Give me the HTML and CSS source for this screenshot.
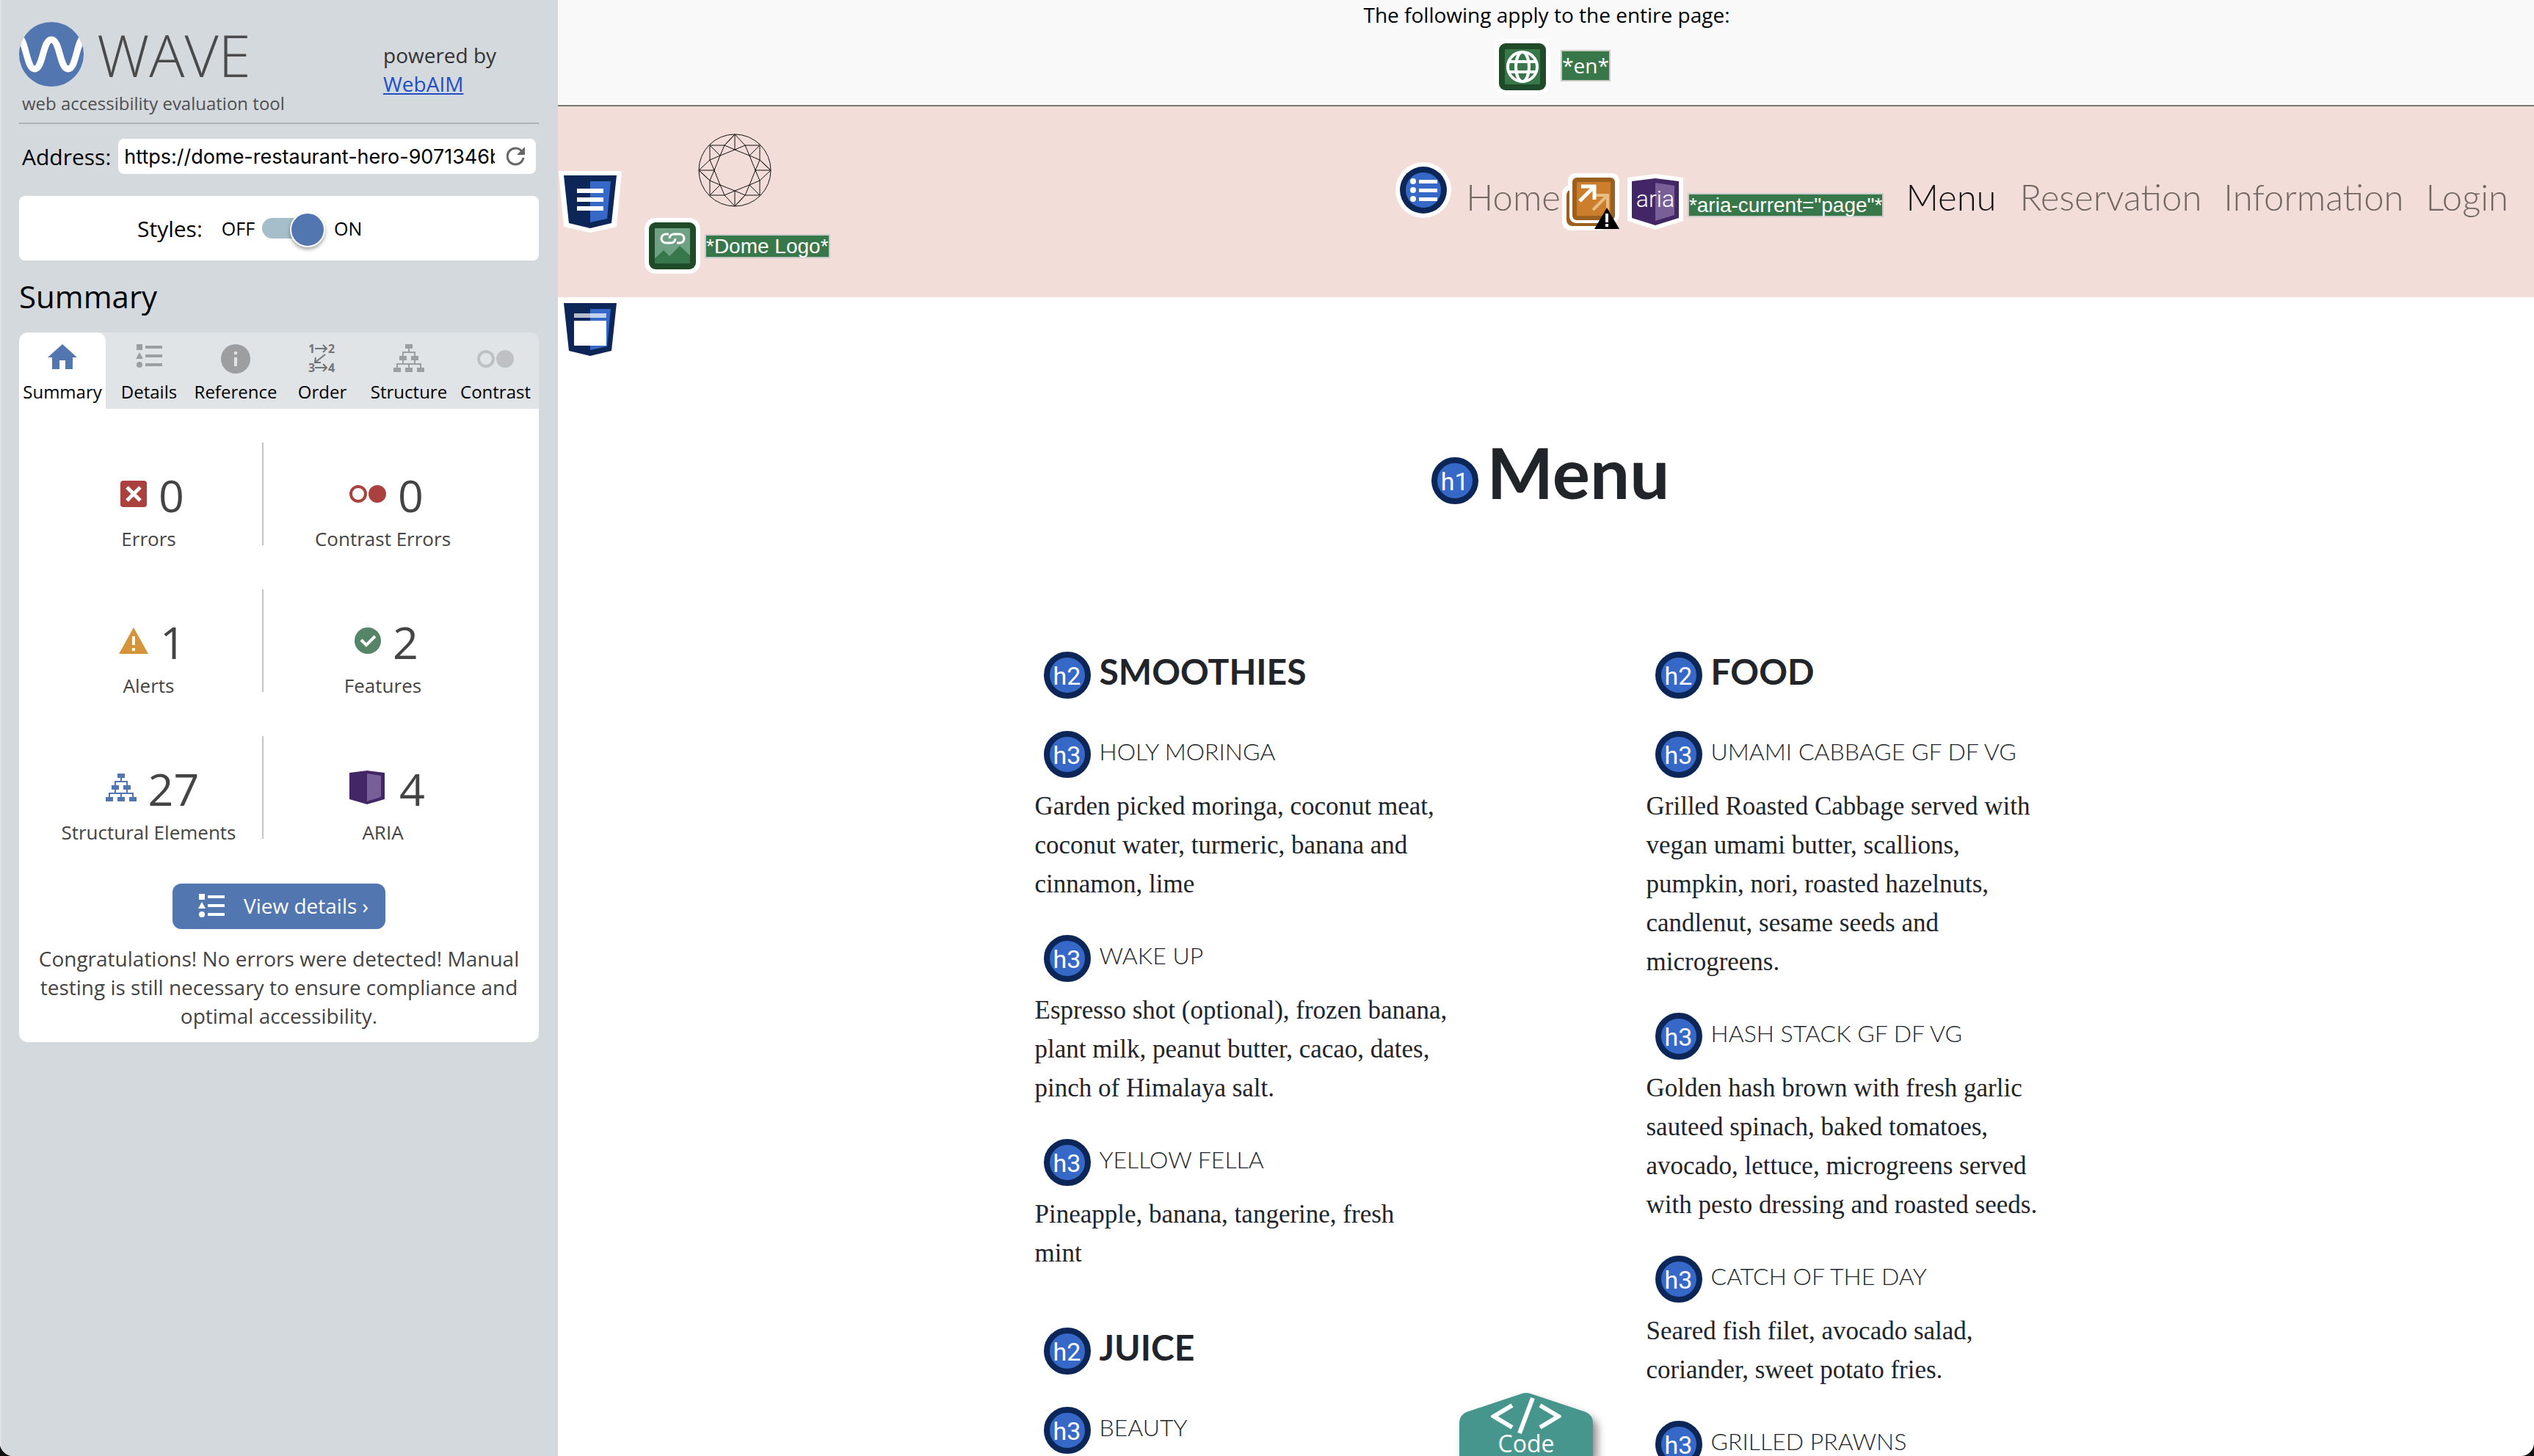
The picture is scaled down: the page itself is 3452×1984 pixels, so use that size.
FILE: index.html
```html
<!DOCTYPE html>
<html lang="en">
<head>
<meta charset="utf-8">
<title>WAVE Report of Dome Restaurant Menu</title>
<link rel="stylesheet" href="styles.css">
</head>
<body>
<svg class="defs" aria-hidden="true">
  <symbol id="i-list" viewBox="0 0 36 32">
    <rect x="1" width="8" height="8"/><path d="M5 11l5 9H0z"/><circle cx="5" cy="28" r="4"/>
    <rect x="13" y="2" width="23" height="4"/><rect x="13" y="14" width="23" height="4"/><rect x="13" y="26" width="23" height="4"/>
  </symbol>
  <symbol id="i-tree" viewBox="0 0 42 38">
    <path d="M16 0h10v6H16zM8 16h10v6H8zM24 16h10v6H24zM0 32h10v6H0zM16 32h10v6H16zM32 32h10v6H32z"/>
    <path d="M21 5v6M13 17v-6h16v6M13 21v6M29 21v6M5 33v-6h32v6M21 27v6" fill="none" stroke="currentColor" stroke-width="2"/>
  </symbol>
  <symbol id="i-contrast" viewBox="0 0 50 24">
    <circle cx="12" cy="12" r="10" fill="none" stroke="currentColor" stroke-width="4"/><circle cx="38" cy="12" r="12"/>
  </symbol>
</svg>
<div class="app">
<aside class="sidebar">
  <header class="brand">
    <div class="brand-main">
      <div class="brand-logo">
        <svg width="88" height="88" viewBox="0 0 88 88" aria-hidden="true"><defs><clipPath id="disc"><circle cx="44" cy="44" r="44"/></clipPath></defs><circle cx="44" cy="44" r="44" fill="#5276b0"/><path clip-path="url(#disc)" d="M-2 18C10 24 10 64 21 64C33 64 32 24 44 24C56 24 55 64 67 64C78 64 78 24 90 18" fill="none" stroke="#fff" stroke-width="9"/></svg>
        <span class="brand-name">WAVE</span>
      </div>
      <p class="tagline">web accessibility evaluation tool</p>
    </div>
    <p class="powered">powered by<br><a href="#webaim">WebAIM</a></p>
  </header>
  <form class="address">
    <label for="url">Address:</label>
    <div class="address-box">
      <input id="url" type="text" value="https://dome-restaurant-hero-9071346b">
      <button type="button" aria-label="Reload"><svg width="26" height="26" viewBox="0 0 26 26"><path d="M22 8A11 11 0 1 0 23 15" fill="none" stroke="#666" stroke-width="3"/><path d="M25 0v11H14z" fill="#666"/></svg></button>
    </div>
  </form>
  <div class="styles-box">
    <span class="styles-label">Styles:</span>
    <label class="toggle"><span>OFF</span><input type="checkbox" checked><span>ON</span></label>
  </div>
  <h2 class="side-title">Summary</h2>
  <nav class="tabs">
    <button class="tab tab-active"><svg width="40" height="34" viewBox="0 0 40 34"><path d="M20 0l20 18h-6v16H24V22h-8v12H6V18H0z"/></svg>Summary</button>
    <button class="tab"><svg width="36" height="32"><use href="#i-list"/></svg>Details</button>
    <button class="tab"><svg width="40" height="40" viewBox="0 0 40 40"><circle cx="20" cy="20" r="20"/><path d="M18 10h4v4h-4zM18 18h4v12h-4z" fill="#e0e4e7"/></svg>Reference</button>
    <button class="tab tab-order"><svg width="40" height="40" viewBox="0 0 40 40"><g font-family="Open Sans" font-weight="700" font-size="16"><text x="1" y="12">1</text><text x="28" y="12">2</text><text x="1" y="38">3</text><text x="28" y="38">4</text></g><path d="M10 6h16M21 1l5 5-5 5M10 32h16M21 27l5 5-5 5M24 14L10 25M11 18l-1 7h8" fill="none" stroke="currentColor" stroke-width="2"/></svg>Order</button>
    <button class="tab"><svg width="42" height="38"><use href="#i-tree"/></svg>Structure</button>
    <button class="tab tab-faint"><svg width="50" height="40" viewBox="0 -8 50 40"><use href="#i-contrast" width="50" height="24"/></svg>Contrast</button>
  </nav>
  <section class="panel">
    <ul class="stats">
      <li><div class="stat"><svg class="red" width="36" height="36" viewBox="0 0 36 36"><rect width="36" height="36" rx="4"/><path d="M9 9l18 18M27 9L9 27" stroke="#fff" stroke-width="5"/></svg><b>0</b></div>Errors</li>
      <li><div class="stat"><svg class="red" width="50" height="24"><use href="#i-contrast"/></svg><b>0</b></div>Contrast Errors</li>
      <li><div class="stat"><svg class="amber" width="40" height="36" viewBox="0 0 40 36"><path d="M20 0l20 36H0z"/><path d="M18 12h4v12h-4zM18 28h4v4h-4z" fill="#fff"/></svg><b>1</b></div>Alerts</li>
      <li><div class="stat"><svg class="green" width="36" height="36" viewBox="0 0 36 36"><circle cx="18" cy="18" r="18"/><path d="M9 17l7 7 12-12" fill="none" stroke="#fff" stroke-width="4"/></svg><b>2</b></div>Features</li>
      <li><div class="stat"><svg class="blue" width="42" height="38"><use href="#i-tree"/></svg><b>27</b></div>Structural Elements</li>
      <li><div class="stat"><svg width="54" height="46" viewBox="-2 0 54 46"><path d="M0 3l24-3 24 3v36l-24 7-24-7z" fill="#432665"/><path d="M24 4l19 3v29l-19 6z" fill="#795f98"/></svg><b>4</b></div>ARIA</li>
    </ul>
    <button class="details"><svg width="36" height="32"><use href="#i-list"/></svg>View details ›</button>
    <p class="congrats">Congratulations! No errors were detected! Manual testing is still necessary to ensure compliance and optimal accessibility.</p>
  </section>
</aside>
<div class="page">
  <div class="page-bar">
    <p>The following apply to the entire page:</p>
    <div class="page-icons">
      <svg width="76" height="76" viewBox="-6 -6 76 76"><rect x="-6" y="-6" width="76" height="76" rx="15" fill="#fff"/><rect width="64" height="64" rx="9" fill="#1f4b29"/><rect x="8" y="8" width="48" height="48" rx="1" fill="#38774a"/><g fill="none" stroke="#fff" stroke-width="4"><circle cx="32" cy="32" r="20"/><ellipse cx="32" cy="32" rx="9" ry="20"/><path d="M14 25h36M14 39h36"/></g></svg>
      <span class="tag tag-lang">*en*</span>
    </div>
  </div>
  <header class="site-header">
    <svg class="landmark" width="86" height="84" viewBox="-7 -6 86 84"><path d="M-7-6H79L72 70 36 78 0 70z" fill="#fff"/><path d="M0 0h72l-7 65-29 7-29-7z" fill="#0c2757"/><path d="M36 8h28l-5 51-23 5z" fill="#3669c7"/><path d="M18 18h36v6H18zM18 30h36v6H18zM18 42h36v6H18z" fill="#fff"/></svg>
    <a class="logo" href="#home" aria-label="Dome">
      <svg class="dome" width="102" height="102" viewBox="-51 -51 102 102"><circle r="49"/><g><g id="q"><path d="M0-49V-28M0-49L14-34 34-34 20-20 14-34 0-28 20-20M0-49L-14-34 0-28-20-20M34-34V-14L20-20M34-14L49 0"/></g><use href="#q" transform="rotate(90)"/><use href="#q" transform="rotate(180)"/><use href="#q" transform="rotate(270)"/></g></svg>
      <span class="logo-note"><svg width="76" height="76" viewBox="-6 -6 76 76"><rect x="-6" y="-6" width="76" height="76" rx="15" fill="#fff"/><rect width="64" height="64" rx="9" fill="#1f4b29"/><rect x="8" y="8" width="48" height="48" rx="1" fill="#6fa184"/><path d="M8 49l12-11 8 8 14-14 14 13v11H8z" fill="#38774a"/><path d="M27 16h-4a6 6 0 0 0 0 12h7a6 6 0 0 0 6-6M38 28h4a6 6 0 0 0 0-12h-7a6 6 0 0 0-7 6" fill="none" stroke="#fff" stroke-width="3"/></svg><span class="tag">*Dome Logo*</span></span>
    </a>
    <nav class="site-nav">
      <svg class="nav-list" width="76" height="76" viewBox="-38 -38 76 76"><circle r="38" fill="#fff"/><circle r="32" fill="#0c2757"/><circle r="24" fill="#3669c7"/><g fill="#fff"><circle cx="-14" cy="-12" r="4"/><circle cx="-14" r="4"/><circle cx="-14" cy="12" r="4"/><path d="M-6-14h25v5H-6zM-6-2h25v5H-6zM-6 10h25v5H-6z"/></g></svg>
      <a href="#home">Home</a>
      <svg class="nav-alert" width="78" height="78" viewBox="0 0 78 78"><rect x="8" width="70" height="68" rx="10" fill="#fff"/><rect y="16" width="62" height="62" rx="12" fill="#fff"/><rect x="6" y="22" width="50" height="50" rx="8" fill="#9b5f20"/><rect x="10" y="2" width="66" height="66" rx="9" fill="#fff"/><rect x="14" y="6" width="58" height="58" rx="6" fill="#9b5f20"/><rect x="20" y="12" width="46" height="46" rx="1" fill="#cd7e2c"/><path d="M42 50L61 31M46 30h16v20" fill="none" stroke="#e6bd84" stroke-width="4"/><path d="M24 38L43 19M26 18h18v18" fill="none" stroke="#fff" stroke-width="5"/><path d="M61 47l17 29H44z" fill="#000"/><path d="M59 55h4v12h-4zM59 69h4v4h-4z" fill="#fff"/></svg>
      <svg class="nav-aria" width="76" height="76" viewBox="-6 -6 76 76"><path d="M-6-1L32-6 70-1V58L32 70-6 58z" fill="#fff"/><path d="M0 4l32-4 32 4v50L32 64 0 54z" fill="#432665"/><path d="M32 6l26 4v40l-26 8z" fill="#795f98"/><text x="32" y="39" text-anchor="middle" font-family="Roboto" font-size="32" fill="#fff">aria</text></svg>
      <span class="tag">*aria-current="page"*</span>
      <a class="current" href="#menu" aria-current="page">Menu</a>
      <a href="#reservation">Reservation</a>
      <a href="#information">Information</a>
      <a href="#login">Login</a>
    </nav>
  </header>
  <main class="content">
    <svg class="main-mark" width="72" height="72" viewBox="0 0 72 72"><path d="M0 0h72l-7 65-29 7-29-7z" fill="#0c2757"/><path d="M36 8h28l-5 51-23 5z" fill="#3669c7"/><path d="M14 14h44v6H14z" fill="#fff" opacity=".7"/><path d="M14 24h44v34H14z" fill="#fff"/></svg>
    <h1><i class="badge">h1</i><span>Menu</span></h1>
    <div class="columns">
      <div class="column">
        <section>
          <h2><i class="badge">h2</i><span>SMOOTHIES</span></h2>
          <h3><i class="badge">h3</i><span>HOLY MORINGA</span></h3>
          <p>Garden picked moringa, coconut meat,<br>coconut water, turmeric, banana and<br>cinnamon, lime</p>
          <h3><i class="badge">h3</i><span>WAKE UP</span></h3>
          <p>Espresso shot (optional), frozen banana,<br>plant milk, peanut butter, cacao, dates,<br>pinch of Himalaya salt.</p>
          <h3><i class="badge">h3</i><span>YELLOW FELLA</span></h3>
          <p>Pineapple, banana, tangerine, fresh<br>mint</p>
        </section>
        <section>
          <h2><i class="badge">h2</i><span>JUICE</span></h2>
          <h3><i class="badge">h3</i><span>BEAUTY</span></h3>
        </section>
      </div>
      <div class="column">
        <section>
          <h2><i class="badge">h2</i><span>FOOD</span></h2>
          <h3><i class="badge">h3</i><span>UMAMI CABBAGE GF DF VG</span></h3>
          <p>Grilled Roasted Cabbage served with<br>vegan umami butter, scallions,<br>pumpkin, nori, roasted hazelnuts,<br>candlenut, sesame seeds and<br>microgreens.</p>
          <h3><i class="badge">h3</i><span>HASH STACK GF DF VG</span></h3>
          <p>Golden hash brown with fresh garlic<br>sauteed spinach, baked tomatoes,<br>avocado, lettuce, microgreens served<br>with pesto dressing and roasted seeds.</p>
          <h3><i class="badge">h3</i><span>CATCH OF THE DAY</span></h3>
          <p>Seared fish filet, avocado salad,<br>coriander, sweet potato fries.</p>
          <h3><i class="badge">h3</i><span>GRILLED PRAWNS</span></h3>
        </section>
      </div>
    </div>
  </main>
  <button class="code"><svg class="code-shape" width="182" height="87" viewBox="0 0 182 87"><path d="M0 87V42q0-11 10-15L85 2q6-2 12 0l75 25q10 4 10 15v45z"/></svg><svg class="code-icon" width="96" height="50" viewBox="0 0 96 50"><path d="M29 11L4 26l25 15M67 11l25 15-25 15"/><path d="M57 1L39 49"/></svg><span>Code</span></button>
</div>
</div>
</body>
</html>
```
FILE: styles.css
```css
* { box-sizing: border-box; }
body { margin: 0; font-family: "Open Sans", sans-serif; color: #000; background: #111; }
h1, h2, h3, p, ul { margin: 0; padding: 0; }
svg { display: block; flex: none; fill: currentColor; }
button { font: inherit; border: 0; padding: 0; margin: 0; background: none; }
.defs { position: absolute; width: 0; height: 0; }
.app { display: flex; height: 100vh; overflow: hidden; background: #fff; border-radius: 0 0 18px 18px; }

/* Sidebar */
.sidebar { flex: 0 0 760px; padding: 30px 26px 0 24px; background: #d4d9dd; border-left: 2px solid #dfe2e6; }
.brand { display: flex; justify-content: space-between; height: 139px; border-bottom: 2px solid #afb3b8; }
.brand-logo { display: flex; align-items: center; gap: 18px; height: 88px; color: #4a4a4a; }
.brand-name { font-size: 80px; font-weight: 300; line-height: 88px; }
.tagline { padding-left: 4px; font-size: 24px; line-height: 46px; color: #4f4f4f; }
.powered { width: 212px; padding-top: 26px; font-size: 28px; line-height: 39px; color: #333; }
.powered a { color: #1f50c5; }
.address { display: flex; align-items: center; gap: 10px; margin: 20px 4px 30px; font-size: 30px; }
.address-box { flex: 1; display: flex; align-items: center; height: 48px; padding: 0 14px 0 8px; background: #fff; border-radius: 8px; }
.address-box input { flex: 1; min-width: 0; padding: 0; margin-right: 16px; border: 0; outline: 0; font: 27px Inter, sans-serif; color: #000; }
.styles-box { display: flex; align-items: center; gap: 26px; height: 88px; padding-left: 161px; background: #fff; border-radius: 8px; font-size: 30px; }
.toggle { display: flex; align-items: center; gap: 10px; font-size: 25px; }
.toggle input { appearance: none; position: relative; width: 86px; height: 28px; margin: 0 2px 0 0; }
.toggle input::before { content: ""; position: absolute; inset: 0 12px 0 0; border-radius: 14px; background: #a6bec9; }
.toggle input::after { content: ""; position: absolute; right: 0; top: -8px; width: 44px; height: 44px; border: 2px solid #fff; border-radius: 50%; background: #5276b0; box-shadow: 0 3px 5px rgba(0,0,0,.35); }
.side-title { padding: 20px 0; font-size: 42px; line-height: 58px; font-weight: 400; }
.tabs { display: grid; grid-template-columns: repeat(6, 1fr); height: 104px; background: #e0e4e7; border-radius: 12px 12px 0 0; }
.tab { display: grid; grid-template-rows: 52px 26px; align-content: start; justify-items: center; padding-top: 16px; font-size: 24px; line-height: 26px; color: #000; }
.tab svg { color: #9d9ea0; overflow: visible; }
.tab-active { background: #fff; border-radius: 12px 12px 0 0; }
.tab-active svg { color: #5276b0; }
.tab-order svg { color: #737475; }
.tab-faint svg { color: #bfc0c3; }
.panel { display: flex; flex-direction: column; align-items: center; padding: 46px 20px 5px; background: #fff; border-radius: 0 0 12px 12px; color: #444; }
.stats { align-self: stretch; display: grid; grid-template-columns: 313px 325px; row-gap: 60px; list-style: none; font-size: 26px; line-height: 36px; text-align: center; }
.stats li { height: 140px; padding-top: 37px; }
.stats li:nth-child(odd) { padding-left: 2px; border-right: 2px solid #c4c4c4; }
.stat { display: flex; justify-content: center; align-items: center; gap: 16px; height: 74px; padding: 0 0 8px 10px; margin-bottom: 2px; }
.stat b { padding-top: 3px; font-size: 61px; line-height: 64px; font-weight: 400; }
.red { color: #aa413e; }
.amber { color: #d5933a; }
.green { color: #568467; }
.blue { color: #5276b0; }
.details { display: flex; align-items: center; gap: 26px; width: 290px; height: 62px; margin: 61px 0 21px; padding-left: 35px; border-radius: 12px; background: #5276b0; color: #fff; font-size: 28px; line-height: 34px; padding-bottom: 2px; }
.congrats { font-size: 28px; line-height: 39px; padding-bottom: 11px; text-align: center; }

/* Evaluated page */
.page { position: relative; flex: 1; min-width: 0; }
.page-bar { height: 145px; padding-left: 2px; background: #f9f9f9; border-bottom: 2px solid #737b71; font-size: 28px; line-height: 40px; text-align: center; }
.page-icons { display: flex; justify-content: center; align-items: center; gap: 14px; margin-top: 13px; padding-left: 16px; }
.tag { padding: 0; border: 2px solid #c8cbc8; background: #38774a; color: #fff; font: 28px/29px "Liberation Sans", sans-serif; white-space: nowrap; }
.tag-lang { margin-bottom: 4px; font: 28px/39px "Open Sans", sans-serif; }
.site-header { display: flex; align-items: center; height: 260px; padding: 0 35px 0 1px; background: #f2ddd8; }
.logo { display: flex; flex-direction: column; gap: 14px; margin: 4px 0 0 31px; text-decoration: none; }
.dome { margin-left: 72px; fill: none; stroke: #111; stroke-width: 1; }
.logo-note { display: flex; align-items: center; gap: 6px; }
.site-nav { display: flex; align-items: center; margin-left: auto; font: 300 49px/56px Lato, sans-serif; }
.site-nav a { padding: 0 0 14px 30px; color: #726863; text-decoration: none; }
.site-nav svg + a { padding-left: 20px; }
.site-nav .current { padding-right: 2px; color: #111; }
.nav-list { margin-bottom: 32px; }
.nav-alert { margin: 0 11px 0 2px; }
.nav-aria { margin-right: 6px; }
.site-nav .tag { margin-top: 8px; }
.content { position: relative; display: flex; flex-direction: column; align-items: center; padding-top: 190px; color: #212529; font-family: Lato, sans-serif; }
.main-mark { position: absolute; left: 8px; top: 8px; }
h1, h2, h3 { display: flex; align-items: center; }
h1 { margin-bottom: 173px; font-size: 96px; line-height: 96px; font-weight: 700; }
h1 span { padding-bottom: 24px; }
.column h2 { height: 64px; margin-bottom: 44px; font-size: 48px; line-height: 48px; font-weight: 700; }
.column h2 span { padding-bottom: 11px; }
.column h3 { height: 64px; margin-bottom: 12px; font-size: 32px; line-height: 40px; font-weight: 300; }
.column h3 span { padding-bottom: 9px; }
.badge { display: flex; align-items: center; justify-content: center; width: 64px; height: 64px; margin: 0 12px; padding-top: 2px; border: 8px solid #0c2757; border-radius: 50%; background: #3669c7; color: #fff; font: 34px/46px Roboto, sans-serif; }
.columns { display: grid; grid-template-columns: 560px 560px; column-gap: 273px; }
.column p { margin-bottom: 43px; font: 35px/53px "Liberation Serif", serif; white-space: nowrap; }
.column section + section { margin-top: 75px; }
.code { position: absolute; bottom: 0; left: calc(50% - 118px); display: flex; flex-direction: column; align-items: center; width: 182px; height: 87px; padding-top: 7px; color: #fff; font-size: 32px; line-height: 26px; }
.code-shape { position: absolute; left: 0; top: 0; overflow: visible; color: #46968e; filter: drop-shadow(6px 8px 6px rgba(0,0,0,.45)); }
.code-icon { position: relative; fill: none; stroke: #fff; stroke-width: 6; }
.code span { position: relative; }
```
